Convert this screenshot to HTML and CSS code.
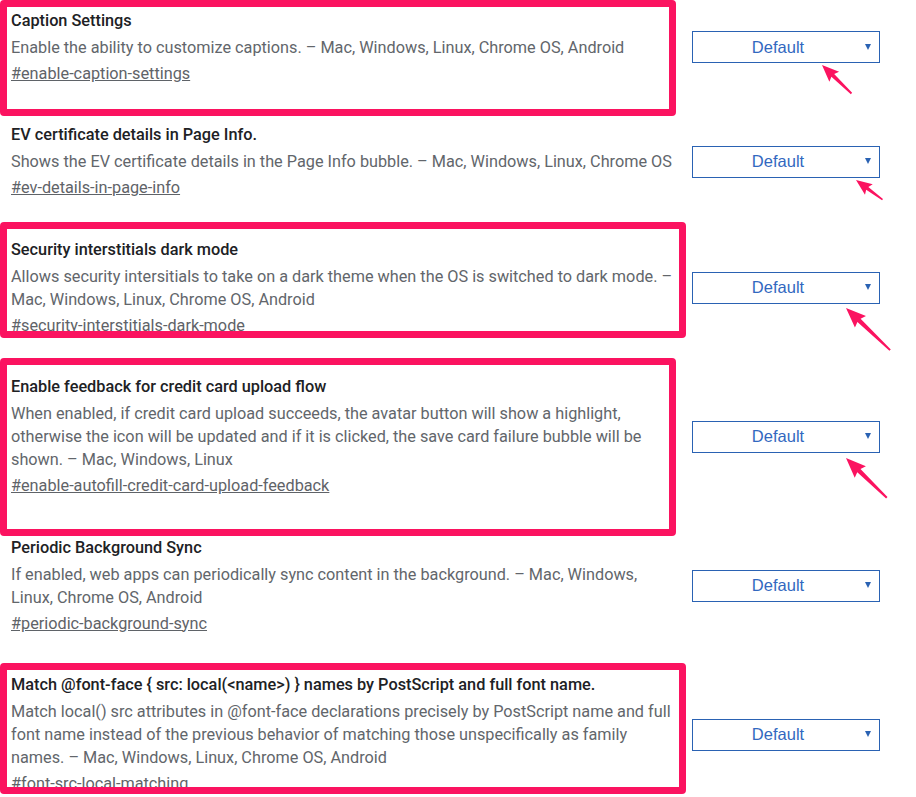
FILE: index.html
```html
<!DOCTYPE html>
<html lang="en">
<head>
<meta charset="utf-8">
<title>Flags</title>
<link rel="stylesheet" href="styles.css">
</head>
<body>
<div class="page">
  <div class="list">
    <div class="experiment">
      <div class="info">
        <h2 class="name">Caption Settings</h2>
        <p class="desc">Enable the ability to customize captions. – Mac, Windows, Linux, Chrome OS, Android</p>
        <a class="perm" href="#enable-caption-settings">#enable-caption-settings</a>
      </div>
      <div class="select"><span class="label">Default</span><span class="caret"></span></div>
    </div>
    <div class="experiment">
      <div class="info">
        <h2 class="name">EV certificate details in Page Info.</h2>
        <p class="desc">Shows the EV certificate details in the Page Info bubble. – Mac, Windows, Linux, Chrome OS</p>
        <a class="perm" href="#ev-details-in-page-info">#ev-details-in-page-info</a>
      </div>
      <div class="select"><span class="label">Default</span><span class="caret"></span></div>
    </div>
    <div class="experiment">
      <div class="info">
        <h2 class="name">Security interstitials dark mode</h2>
        <p class="desc">Allows security intersitials to take on a dark theme when the OS is switched to dark mode. – Mac, Windows, Linux, Chrome OS, Android</p>
        <a class="perm" href="#security-interstitials-dark-mode">#security-interstitials-dark-mode</a>
      </div>
      <div class="select"><span class="label">Default</span><span class="caret"></span></div>
    </div>
    <div class="experiment">
      <div class="info">
        <h2 class="name">Enable feedback for credit card upload flow</h2>
        <p class="desc">When enabled, if credit card upload succeeds, the avatar button will show a highlight, otherwise the icon will be updated and if it is clicked, the save card failure bubble will be shown. – Mac, Windows, Linux</p>
        <a class="perm" href="#enable-autofill-credit-card-upload-feedback">#enable-autofill-credit-card-upload-feedback</a>
      </div>
      <div class="select"><span class="label">Default</span><span class="caret"></span></div>
    </div>
    <div class="experiment">
      <div class="info">
        <h2 class="name">Periodic Background Sync</h2>
        <p class="desc">If enabled, web apps can periodically sync content in the background. – Mac, Windows, Linux, Chrome OS, Android</p>
        <a class="perm" href="#periodic-background-sync">#periodic-background-sync</a>
      </div>
      <div class="select"><span class="label">Default</span><span class="caret"></span></div>
    </div>
    <div class="experiment">
      <div class="info">
        <h2 class="name">Match @font-face { src: local(&lt;name&gt;) } names by PostScript and full font name.</h2>
        <p class="desc">Match local() src attributes in @font-face declarations precisely by PostScript name and full font name instead of the previous behavior of matching those unspecifically as family names. – Mac, Windows, Linux, Chrome OS, Android</p>
        <a class="perm" href="#font-src-local-matching">#font-src-local-matching</a>
      </div>
      <div class="select"><span class="label">Default</span><span class="caret"></span></div>
    </div>
  </div>

  <div class="mark mark-1"></div>
  <div class="mark mark-2"></div>
  <div class="mark mark-3"></div>
  <div class="mark mark-4"></div>

  <svg class="arrows" width="916" height="797" viewBox="0 0 916 797" aria-hidden="true">
    <g fill="#fb1360">
      <path transform="translate(822 65) rotate(44)" d="M0 0 L17 -7 L15 -2 L41 -0.9 L41 0.9 L15 2 L17 7 Z"/>
      <path transform="translate(856 180) rotate(36.5)" d="M0 0 L16 -6.5 L14 -1.8 L33 -0.8 L33 0.8 L14 1.8 L16 6.5 Z"/>
      <path transform="translate(846 308) rotate(43.7)" d="M0 0 L20 -8 L18 -2.3 L61 -1 L61 1 L18 2.3 L20 8 Z"/>
      <path transform="translate(846 458) rotate(44.3)" d="M0 0 L20 -8 L18 -2.3 L57 -1 L57 1 L18 2.3 L20 8 Z"/>
    </g>
  </svg>
</div>
</body>
</html>
```

FILE: styles.css
```css
* { box-sizing: border-box; }

html, body {
  margin: 0;
  padding: 0;
  background: #ffffff;
}

.page {
  position: relative;
  width: 916px;
  height: 797px;
  overflow: hidden;
  font-family: Roboto, "Liberation Sans", Arial, sans-serif;
}

.list {
  display: flex;
  flex-direction: column;
  gap: 39.5px;
  padding: 9.5px 0 0 11px;
}

.experiment {
  display: flex;
  align-items: center;
}

.info {
  flex: 0 0 665px;
  width: 665px;
}

.name {
  margin: 0;
  font-size: 16.3px;
  font-weight: 500;
  line-height: 21px;
  color: #202124;
}

.desc {
  margin: 5px 0 0;
  font-size: 16.25px;
  line-height: 23px;
  color: #62666b;
}

.perm {
  display: block;
  margin-top: 3px;
  font-size: 16.25px;
  line-height: 23px;
  color: #5f6368;
  text-decoration: underline;
}

.select {
  display: flex;
  align-items: center;
  margin-left: 16px;
  width: 188px;
  height: 32px;
  border: 1px solid #2a62b3;
  background: #ffffff;
  padding-right: 8px;
}

.select .label {
  flex: 1;
  text-align: center;
  font-family: "Liberation Sans", Arial, sans-serif;
  font-size: 16.5px;
  color: #3268c0;
  margin-right: 2px;
}

.select .caret {
  width: 0;
  height: 0;
  border-left: 3.5px solid transparent;
  border-right: 3.5px solid transparent;
  border-top: 6px solid #2a62b3;
  margin-top: -1px;
}

.mark {
  position: absolute;
  border: 7px solid #fb1360;
  border-radius: 4px;
  pointer-events: none;
}

.mark-1 { left: 0; top: 0; width: 676px; height: 116px; }
.mark-2 { left: 0; top: 222px; width: 686px; height: 116px; }
.mark-3 { left: 0; top: 358px; width: 676px; height: 178px; }
.mark-4 { left: 0; top: 663px; width: 686px; height: 131px; }

.arrows {
  position: absolute;
  left: 0;
  top: 0;
  pointer-events: none;
}
```
